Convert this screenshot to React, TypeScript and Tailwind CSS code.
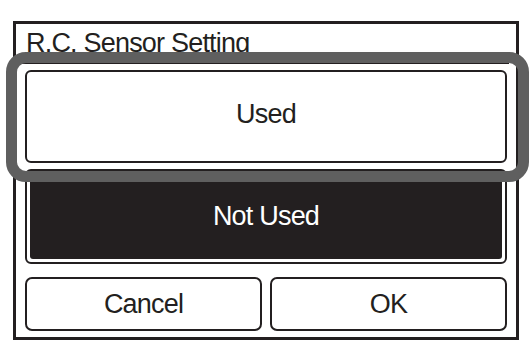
import React from 'react';

// R.C. Sensor Setting - écran de sélection
const font = "font-['Liberation_Sans',Arial,sans-serif] tracking-[-0.8px]";

export default function App() {
  return (
    <div className="relative w-[532px] h-[348px] bg-white">
      <div className={`absolute left-[13px] top-[21px] w-[506px] h-[319px] border-[3px] border-[#231f20] flex flex-col ${font} text-[#231f20]`}>
        {/* Titre */}
        <div className="h-[38px] pt-[4px] pl-[10px] text-[27px] leading-[30px]">R.C. Sensor Setting</div>
        <div className="h-[2px] ml-[6px] mr-[7px] bg-[#231f20]" />

        {/* Options */}
        <button className="mt-[6px] mx-[9px] h-[93px] border-2 border-[#231f20] rounded-[6px] bg-white flex items-center justify-center pb-[6px] text-[27px] leading-[30px]">
          Used
        </button>
        <div className="mt-[6px] mx-[9px] h-[95px] border-2 border-[#231f20] rounded-[6px] p-[3px] bg-white">
          <div className="w-full h-full bg-[#231f20] rounded-[3px] flex items-center justify-center pb-[2px] text-white text-[27px] leading-[30px]">
            Not Used
          </div>
        </div>

        {/* Boutons du bas */}
        <div className="mt-[13px] mx-[9px] h-[54px] flex gap-[8px]">
          <button className="flex-1 border-2 border-[#231f20] rounded-[7px] flex items-center justify-center text-[27px] leading-[30px]">
            Cancel
          </button>
          <button className="flex-1 border-2 border-[#231f20] rounded-[7px] flex items-center justify-center text-[27px] leading-[30px]">
            OK
          </button>
        </div>
      </div>

      {/* Surbrillance de la sélection */}
      <div className="absolute left-[6px] top-[52px] w-[523px] h-[130px] border-[11px] border-[#5f5f5f] rounded-[20px] pointer-events-none" />
    </div>
  );
}
